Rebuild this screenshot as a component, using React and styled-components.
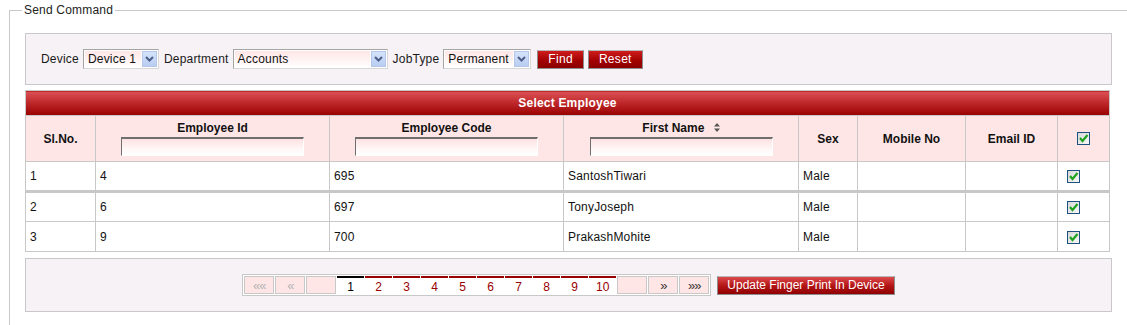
import React from "react"
import styled, { createGlobalStyle } from "styled-components"

const employees = [
	{ sl: 1, id: 4, code: 695, name: "SantoshTiwari", sex: "Male" },
	{ sl: 2, id: 6, code: 697, name: "TonyJoseph", sex: "Male" },
	{ sl: 3, id: 9, code: 700, name: "PrakashMohite", sex: "Male" },
]

const colWidths = [70, 234, 234, 235, 59, 108, 92, 52]
const pages = [1, 2, 3, 4, 5, 6, 7, 8, 9, 10]

const Chevron = () => (
	<svg width="9" height="6" viewBox="0 0 9 6">
		<path d="M1 1 L4.5 4.5 L8 1" fill="none" stroke="#4b5f88" strokeWidth="2" />
	</svg>
)

const Tick = () => (
	<svg width="11" height="11" viewBox="0 0 11 11">
		<path d="M2 5 L4.5 8 L9.5 2" fill="none" stroke="#1fa31f" strokeWidth="2.2" />
	</svg>
)

const SortIcon = () => (
	<svg width="6" height="9" viewBox="0 0 6 9">
		<path d="M3 0 L6 3.5 L0 3.5 Z M0 5.5 L6 5.5 L3 9 Z" fill="#555" />
	</svg>
)

const Select = ({ width, value }) => (
	<SelectWrap $width={width}>
		<SelectText>{value}</SelectText>
		<SelectArrow><Chevron /></SelectArrow>
	</SelectWrap>
)

const App = () => {
	return (
		<>
			<GlobalStyle />
			<Fieldset>
				<Legend>Send Command</Legend>

				<FilterPanel>
					<Label>Device</Label>
					<Select width={76} value="Device 1" />
					<Label>Department</Label>
					<Select width={155} value="Accounts" />
					<Label>JobType</Label>
					<Select width={88} value="Permanent" />
					<Button $first>Find</Button>
					<Button>Reset</Button>
				</FilterPanel>

				<Grid>
					<colgroup>
						{colWidths.map((w, i) => <col key={i} style={{ width: w }} />)}
					</colgroup>
					<thead>
						<tr>
							<TitleCell colSpan={8}>Select Employee</TitleCell>
						</tr>
						<HeadRow>
							<HeadCell>Sl.No.</HeadCell>
							<HeadCell>
								<HeadLabel>Employee Id</HeadLabel>
								<FilterInput />
							</HeadCell>
							<HeadCell>
								<HeadLabel>Employee Code</HeadLabel>
								<FilterInput />
							</HeadCell>
							<HeadCell>
								<HeadLabel>First Name <SortMark><SortIcon /></SortMark></HeadLabel>
								<FilterInput />
							</HeadCell>
							<HeadCell>Sex</HeadCell>
							<HeadCell>Mobile No</HeadCell>
							<HeadCell>Email ID</HeadCell>
							<HeadCell><CheckBox $center><Tick /></CheckBox></HeadCell>
						</HeadRow>
					</thead>
					<tbody>
						{employees.map((e, i) => (
							<Row key={e.sl} $thick={i === 0}>
								<Cell>{e.sl}</Cell>
								<Cell>{e.id}</Cell>
								<Cell>{e.code}</Cell>
								<Cell>{e.name}</Cell>
								<Cell>{e.sex}</Cell>
								<Cell />
								<Cell />
								<Cell><CheckBox><Tick /></CheckBox></Cell>
							</Row>
						))}
					</tbody>
				</Grid>

				<PagerPanel>
					<Pager>
						<PagerButton $disabled>««</PagerButton>
						<PagerButton $disabled>«</PagerButton>
						<PagerButton />
						{pages.map(p => (
							<PageLink key={p} $current={p === 1}>{p}</PageLink>
						))}
						<PagerButton />
						<PagerButton>»</PagerButton>
						<PagerButton>»»</PagerButton>
					</Pager>
					<UpdateButton>Update Finger Print In Device</UpdateButton>
				</PagerPanel>
			</Fieldset>
		</>
	)
}

const GlobalStyle = createGlobalStyle`
	html, body {
		margin: 0;
		padding: 0;
		background: #fff;
		overflow: hidden;
	}
	body {
		font-family: "Liberation Sans", Arial, sans-serif;
		font-size: 12px;
		letter-spacing: 0.2px;
		color: #1a1a1a;
	}
`

const Fieldset = styled.fieldset`
	margin: 3px 0 0 9px;
	height: 322px;
	padding: 16px 15px 0 15px;
	border: 1px solid #c8c8c8;
	border-right: none;
	border-bottom: none;
	min-width: 0;
	box-sizing: border-box;
`

const Legend = styled.legend`
	margin-left: -3px;
	padding: 0 2px;
	font-size: 12px;
	line-height: 14px;
	color: #222;
`

const FilterPanel = styled.div`
	display: flex;
	align-items: center;
	height: 52px;
	box-sizing: border-box;
	padding-left: 15px;
	background: #f7f2f6;
	border: 1px solid #c8c8c8;
`

const Label = styled.span`
	margin-right: 4px;
	font-size: 12px;
	color: #1a1a1a;
`

const SelectWrap = styled.div`
	display: flex;
	width: ${p => p.$width}px;
	height: 20px;
	box-sizing: border-box;
	margin-right: 5px;
	border: 1px solid #d8d8d8;
	border-top-color: #a5a5a5;
	border-left-color: #a5a5a5;
	background: #fff;
`

const SelectText = styled.div`
	flex: 1;
	padding-left: 3px;
	margin: 1px;
	line-height: 16px;
	font-size: 12px;
	color: #111;
	background: linear-gradient(to bottom, #ffe6e6, #fff4f4 60%, #ffffff);
	overflow: hidden;
	white-space: nowrap;
`

const SelectArrow = styled.div`
	display: flex;
	align-items: center;
	justify-content: center;
	width: 15px;
	margin: 1px 1px 1px 0;
	background: linear-gradient(to bottom, #d6e3fa, #b9cdf2);
	border: 1px solid #b4c6ea;
	box-sizing: border-box;
`

const Button = styled.button`
	height: 19px;
	margin-left: ${p => (p.$first ? "1px" : "4px")};
	padding: 0 10px;
	font-family: "Liberation Sans", Arial, sans-serif;
	font-size: 12px;
	letter-spacing: 0.3px;
	color: #fff;
	background: linear-gradient(to bottom, #d01c1c, #a00000 60%, #8c0000);
	border: 1px solid #8e8e8e;
	border-top-color: #b8b8b8;
	cursor: pointer;
`

const Grid = styled.table`
	width: calc(100% - 3px);
	margin-top: 5px;
	border-collapse: collapse;
	table-layout: fixed;
	border: 1px solid #c8c8c8;
`

const TitleCell = styled.th`
	height: 24px;
	padding: 0;
	font-size: 12px;
	font-weight: bold;
	color: #fff;
	text-align: center;
	background: linear-gradient(to bottom, #dc5256, #c02a2c 45%, #990000);
	border: 1px solid #c8c8c8;
`

const HeadRow = styled.tr`
	height: 46px;
	background: #ffe6e6;
`

const HeadCell = styled.th`
	padding: 0 4px;
	font-size: 12px;
	font-weight: bold;
	letter-spacing: 0;
	color: #111;
	text-align: center;
	vertical-align: middle;
	border: 1px solid #c8c8c8;
`

const HeadLabel = styled.div`
	line-height: 14px;
	margin-bottom: 2px;
`

const SortMark = styled.span`
	display: inline-block;
	margin-left: 6px;
`

const FilterInput = styled.input`
	display: block;
	width: 183px;
	height: 19px;
	box-sizing: border-box;
	margin: 0 auto;
	padding: 0 3px;
	border: 1px solid #ffffff;
	border-top: 2px solid #6f6f6f;
	border-left: 1px solid #6f6f6f;
	background: linear-gradient(to bottom, #ffe2e2, #fff6f6 60%, #ffffff);
	outline: none;
`

const Row = styled.tr`
	height: 30px;
	background: #fff;
	border-bottom: ${p => (p.$thick ? "3px" : "1px")} solid #c8c8c8;
`

const Cell = styled.td`
	padding: 0 4px;
	font-size: 12px;
	color: #111;
	border-left: 1px solid #c8c8c8;
	border-right: 1px solid #c8c8c8;
	white-space: nowrap;
`

const CheckBox = styled.span`
	display: ${p => (p.$center ? "flex" : "inline-flex")};
	align-items: center;
	justify-content: center;
	width: 13px;
	height: 13px;
	box-sizing: border-box;
	margin: ${p => (p.$center ? "0 auto" : "0 0 0 5px")};
	vertical-align: middle;
	border: 1px solid #1c5180;
	background: linear-gradient(135deg, #d8d8d8, #f8f8f8);
`

const PagerPanel = styled.div`
	display: flex;
	align-items: center;
	justify-content: center;
	height: 54px;
	box-sizing: border-box;
	margin-top: 6px;
	background: #f7f2f6;
	border: 1px solid #c8c8c8;
`

const Pager = styled.div`
	display: flex;
	gap: 1px;
	padding: 1px;
	background: #fff;
	border: 1px solid #c8c8c8;
`

const PagerButton = styled.span`
	display: flex;
	align-items: center;
	justify-content: center;
	width: 30px;
	height: 18px;
	box-sizing: border-box;
	font-size: 13px;
	letter-spacing: -1px;
	color: ${p => (p.$disabled ? "#b4b4b4" : "#333")};
	background: #ffe6e6;
	border: 1px solid #c8c8c8;
`

const PageLink = styled.span`
	display: flex;
	align-items: center;
	justify-content: center;
	width: 27px;
	height: 18px;
	box-sizing: border-box;
	padding-top: 2px;
	font-size: 12px;
	color: ${p => (p.$current ? "#000" : "#990000")};
	border-top: 2px solid ${p => (p.$current ? "#000" : "#990000")};
	cursor: pointer;
`

const UpdateButton = styled.button`
	height: 19px;
	margin-left: 6px;
	padding: 0 9px;
	font-family: "Liberation Sans", Arial, sans-serif;
	font-size: 12px;
	letter-spacing: 0;
	color: #fff;
	background: linear-gradient(to bottom, #dc4a4c, #b51616 50%, #900000);
	border: 1px solid #8e8e8e;
	border-top-color: #b8b8b8;
	cursor: pointer;
`

export default App
